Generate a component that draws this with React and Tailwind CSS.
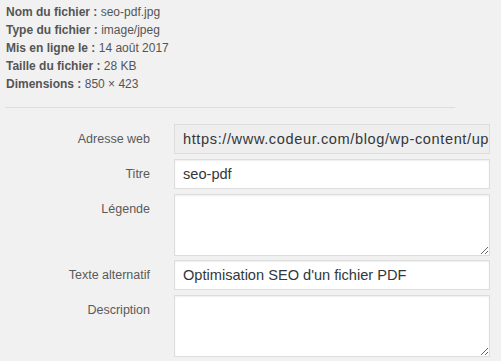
const details = [
  ['Nom du fichier :', 'seo-pdf.jpg'],
  ['Type du fichier :', 'image/jpeg'],
  ['Mis en ligne le :', '14 août 2017'],
  ['Taille du fichier :', '28 KB'],
  ['Dimensions :', '850 × 423'],
];

function Row({ label, children }) {
  return (
    <div className="flex mb-[4px]">
      <div className="w-[150px] shrink-0 text-right text-[12.5px] leading-[31px] text-[#5a5a5a]">{label}</div>
      <div className="ml-[24px] w-[316px]">{children}</div>
    </div>
  );
}

export default function App() {
  const field = 'block w-full h-[30px] border border-[#ddd] bg-white px-[8px] text-[14.6px] text-[#32373c] outline-none shadow-[inset_0_1px_2px_rgba(0,0,0,0.07)]';
  const area = 'block w-full h-[62px] border border-[#ddd] bg-white px-[8px] py-[4px] text-[14.6px] text-[#32373c] outline-none shadow-[inset_0_1px_2px_rgba(0,0,0,0.07)]';

  return (
    <div className="w-[501px] h-[361px] bg-[#f1f1f1] overflow-hidden font-['Liberation_Sans',Arial,sans-serif]">
      <div className="pt-[3px] pl-[6px] text-[12px] leading-[18px] text-[#555]">
        {details.map(([k, v]) => (
          <div key={k}>
            <span className="font-bold">{k}</span> {v}
          </div>
        ))}
      </div>
      <div className="mt-[14px] ml-[5px] w-[450px] h-px bg-[#ddd]" />
      <div className="mt-[16px]">
        <Row label="Adresse web">
          <div className="h-[30px] border border-[#ddd] bg-[#eee] pl-[8px] text-[14.6px] tracking-[0.6px] leading-[28px] text-[#32373c] whitespace-nowrap overflow-hidden">
            https://www.codeur.com/blog/wp-content/uploads/2017/08/seo-pdf.jpg
          </div>
        </Row>
        <Row label="Titre">
          <input className={field} defaultValue="seo-pdf" />
        </Row>
        <Row label="Légende">
          <textarea className={area} />
        </Row>
        <Row label="Texte alternatif">
          <input className={field} defaultValue="Optimisation SEO d'un fichier PDF" />
        </Row>
        <Row label="Description">
          <textarea className={area} />
        </Row>
      </div>
    </div>
  );
}
